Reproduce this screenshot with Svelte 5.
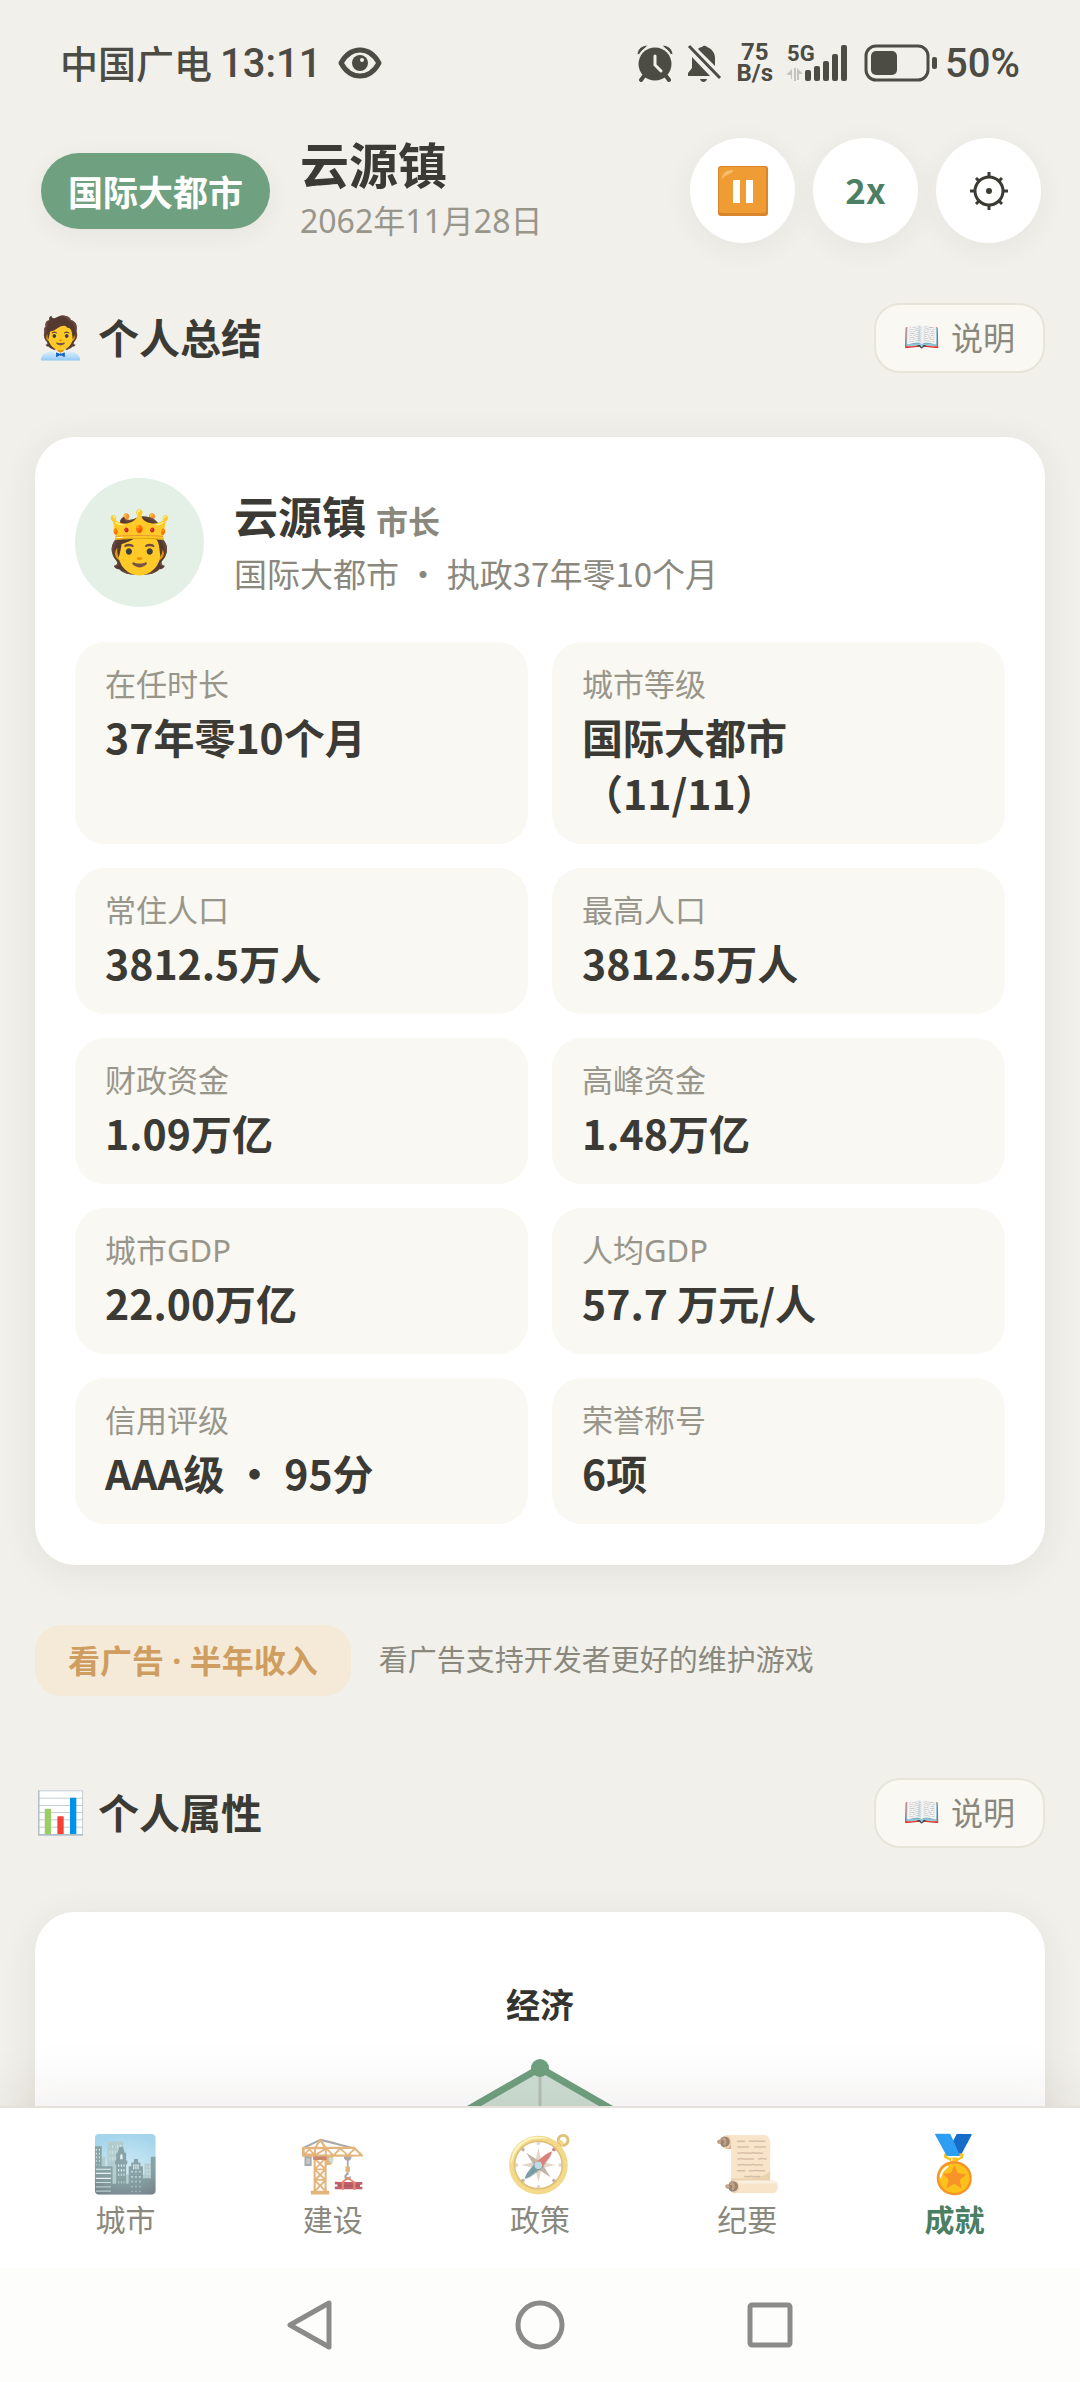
<script>
  let speed = $state(2);
  let active = $state('成就');

  const stats = [
    { label: '在任时长', value: '37年零10个月' },
    { label: '城市等级', value: '国际大都市\n（11/11）' },
    { label: '常住人口', value: '3812.5万人' },
    { label: '最高人口', value: '3812.5万人' },
    { label: '财政资金', value: '1.09万亿' },
    { label: '高峰资金', value: '1.48万亿' },
    { label: '城市GDP', value: '22.00万亿' },
    { label: '人均GDP', value: '57.7 万元/人' },
    { label: '信用评级', value: 'AAA级 · 95分' },
    { label: '荣誉称号', value: '6项' }
  ];

  const tabs = [
    { icon: '🏙️', name: '城市' },
    { icon: '🏗️', name: '建设' },
    { icon: '🧭', name: '政策' },
    { icon: '📜', name: '纪要' },
    { icon: '🏅', name: '成就' }
  ];
</script>

<div class="app">
  <div class="status">
    <div class="status-left">
      <span class="carrier">中国广电</span>
      <span class="num">13:11</span>
      <svg class="eye" width="44" height="32" viewBox="0 0 44 32">
        <path d="M3 16C8 7 15 3 22 3s14 4 19 13c-5 9-12 13-19 13S8 25 3 16z" fill="none" stroke="#4c4b44" stroke-width="5" stroke-linejoin="round" />
        <circle cx="22" cy="16" r="8" fill="#4c4b44" />
        <circle cx="24" cy="13" r="2" fill="#f1f0eb" />
      </svg>
    </div>
    <div class="status-right">
      <svg width="36" height="38" viewBox="0 0 36 38" fill="#4c4b44">
        <circle cx="18" cy="20" r="16.5" />
        <path d="M7 32l-3 4M29 32l3 4" stroke="#4c4b44" stroke-width="4" stroke-linecap="round" />
        <path d="M0 11C0 5 5 1 11 1c-1 3-7 5-8 9zM36 11C36 5 31 1 25 1c1 3 7 5 8 9z" stroke="#f1f0eb" stroke-width="1" />
        <path d="M18 12v9l6 6" fill="none" stroke="#f1f0eb" stroke-width="3" stroke-linecap="round" />
      </svg>
      <svg width="36" height="40" viewBox="0 0 36 40" fill="#4c4b44">
        <path d="M11 6c1-1 2-2 4-2a3 3 0 0 1 5 0c5 2 8 6 8 11v8z" />
        <path d="M5 14l18 19H1v-3l4-5z" />
        <path d="M2 3l31 32" stroke="#4c4b44" stroke-width="3" />
        <path d="M13 36h7c-1 4-6 4-7 0z" />
      </svg>
      <div class="rate"><span>75</span><span>B/s</span></div>
      <div class="signal">
        <span class="net">5G</span>
        <svg width="62" height="38" viewBox="0 0 62 38" fill="#4c4b44">
          <path d="M0 30l5-5v10h-1v-4H0zM7 24h2v13H7zM10 24l6 6h-4v6h-2z" fill="#c4c3bd" />
          <rect x="18" y="26" width="6" height="11" rx="2" />
          <rect x="27" y="22" width="6" height="15" rx="2" />
          <rect x="36" y="17" width="6" height="20" rx="2" />
          <rect x="45" y="10" width="6" height="27" rx="2" />
          <rect x="54" y="1" width="6" height="36" rx="2" />
        </svg>
      </div>
      <svg width="76" height="38" viewBox="0 0 76 38">
        <rect x="3" y="2" width="62" height="34" rx="10" fill="none" stroke="#4c4b44" stroke-width="3" />
        <rect x="8" y="7" width="26" height="24" rx="5" fill="#4c4b44" />
        <rect x="69" y="13" width="5" height="12" rx="2" fill="#4c4b44" />
      </svg>
      <span class="num">50%</span>
    </div>
  </div>

  <header class="topbar">
    <span class="level">国际大都市</span>
    <div class="town">
      <h1>云源镇</h1>
      <p>2062年11月28日</p>
    </div>
    <div class="actions">
      <button class="round" aria-label="暂停">
        <svg width="50" height="50" viewBox="0 0 50 50">
          <rect width="50" height="50" rx="3" fill="#d9852c" />
          <rect x="1" y="1" width="47" height="46" rx="3" fill="#f09c35" />
          <path d="M4 14C4 7 8 4 15 4c1 4-9 4-11 10z" fill="#f8bd6c" />
          <rect x="15" y="14" width="7" height="23" fill="#fff" />
          <rect x="28" y="14" width="7" height="23" fill="#fff" />
        </svg>
      </button>
      <button class="round speed" onclick={() => (speed = speed === 2 ? 1 : 2)}>{speed}x</button>
      <button class="round" aria-label="设置">
        <svg width="38" height="38" viewBox="0 0 38 38" fill="none" stroke="#3b3a34" stroke-width="3">
          <circle cx="19" cy="19" r="14" />
          <circle cx="19" cy="19" r="3" fill="#3b3a34" stroke="none" />
          <path d="M19 0v5M19 33v5M0 19h5M33 19h5M6 6l3 3M29 29l3 3M32 6l-3 3M9 29l-3 3" />
        </svg>
      </button>
    </div>
  </header>

  <main>
    <div class="section-head">
      <h2><span class="emoji">🧑‍💼</span> 个人总结</h2>
      <button class="help"><span class="emoji">📖</span> 说明</button>
    </div>

    <section class="card">
      <div class="profile">
        <div class="avatar emoji">🫅</div>
        <div class="who">
          <div class="name">云源镇 <small>市长</small></div>
          <div class="desc">国际大都市 · 执政37年零10个月</div>
        </div>
      </div>
      <dl class="stats">
        {#each stats as s}
          <div class="stat">
            <dt>{s.label}</dt>
            <dd>{s.value}</dd>
          </div>
        {/each}
      </dl>
    </section>

    <div class="ad">
      <button class="ad-btn">看广告 · 半年收入</button>
      <span class="ad-tip">看广告支持开发者更好的维护游戏</span>
    </div>

    <div class="section-head">
      <h2><span class="emoji">📊</span> 个人属性</h2>
      <button class="help"><span class="emoji">📖</span> 说明</button>
    </div>

    <section class="card radar">
      <svg width="600" height="520" viewBox="0 0 600 520">
        <text x="300" y="65" text-anchor="middle">经济</text>
        <polygon points="300,115 465,210 465,400 300,495 135,400 135,210" />
        <path d="M300 115v190" />
        <circle cx="300" cy="115" r="9" />
      </svg>
    </section>
  </main>

  <nav class="tabs">
    {#each tabs as t}
      <button class="tab" class:active={active === t.name} onclick={() => (active = t.name)}>
        <span class="tab-icon emoji">{t.icon}</span>
        <span>{t.name}</span>
      </button>
    {/each}
  </nav>

  <div class="sysnav">
    <svg width="50" height="54" viewBox="0 0 50 54"><path d="M44 5v44L5 27z" /></svg>
    <svg width="50" height="54" viewBox="0 0 50 54"><circle cx="25" cy="27" r="22" /></svg>
    <svg width="50" height="54" viewBox="0 0 50 54"><rect x="5" y="7" width="40" height="40" rx="2" /></svg>
  </div>
</div>

<style>
:global(body) {
  background: #f1f0eb;
}

.app {
  display: flex;
  flex-direction: column;
  height: 100vh;
  overflow: hidden;
  color: #3b3a34;
  background: #f1f0eb;
  font-family: "Noto Sans CJK SC", sans-serif;
}

h1, h2, p, dl, dd {
  margin: 0;
}

button {
  padding: 0;
  border: none;
  font-family: inherit;
  cursor: pointer;
}

svg {
  display: block;
}

.emoji {
  font-family: "Noto Color Emoji", sans-serif;
  font-weight: 400;
}

/* status bar */
.status {
  display: flex;
  align-items: center;
  justify-content: space-between;
  height: 126px;
  padding: 0 60px;
  box-sizing: border-box;
  color: #4c4b44;
  font-weight: 500;
}

.status-left {
  display: flex;
  align-items: center;
}

.carrier {
  margin-right: 8px;
  padding-bottom: 4px;
  font-size: 38px;
}

.num {
  font-family: Roboto, sans-serif;
  font-size: 40px;
}

.eye {
  margin-left: 16px;
}

.status-right {
  display: flex;
  align-items: center;
  gap: 14px;
}

.rate {
  display: flex;
  flex-direction: column;
  align-items: center;
  font-family: Roboto, sans-serif;
  font-size: 24px;
  font-weight: 700;
  line-height: 21px;
}

.signal {
  position: relative;
}

.net {
  position: absolute;
  top: 0;
  left: 0;
  font-family: Roboto, sans-serif;
  font-size: 22px;
  font-weight: 700;
  line-height: 20px;
}

.status-right .num {
  margin-left: -8px;
}

/* top bar */
.topbar {
  display: flex;
  align-items: center;
  height: 129px;
  padding: 0 39px 0 41px;
}

.level {
  padding: 0 27px;
  border-radius: 38px;
  background: #6fa080;
  box-shadow: 0 6px 24px rgba(60, 50, 30, 0.06);
  color: #fff;
  font-size: 35px;
  font-weight: 700;
  line-height: 76px;
}

.town {
  flex: 1;
  margin-left: 30px;
}

.town h1 {
  font-size: 49px;
  line-height: 60px;
}

.town p {
  color: #98968b;
  font-family: "Noto Sans", "Noto Sans CJK SC", sans-serif;
  font-size: 32px;
  line-height: 56px;
}

.actions {
  display: flex;
  gap: 18px;
}

.round {
  display: flex;
  align-items: center;
  justify-content: center;
  width: 105px;
  height: 105px;
  border-radius: 50%;
  background: #fff;
  box-shadow: 0 6px 30px rgba(60, 50, 30, 0.06);
}

.speed {
  padding-bottom: 4px;
  color: #4c7f65;
  font-size: 35px;
  font-weight: 700;
}

/* page */
main {
  flex: 1;
  min-height: 0;
  padding: 48px 35px 0;
  overflow-y: auto;
  scrollbar-width: none;
}

.section-head {
  display: flex;
  align-items: center;
  justify-content: space-between;
  margin-bottom: 64px;
}

.section-head h2 {
  display: flex;
  align-items: center;
  gap: 12px;
  padding-bottom: 4px;
  font-size: 41px;
  line-height: 60px;
}

.section-head h2 .emoji {
  padding-top: 4px;
}

.help {
  display: flex;
  align-items: center;
  gap: 10px;
  height: 70px;
  padding: 0 28px 4px;
  border: 2px solid #e7e5d9;
  border-radius: 26px;
  background: #f9f8f3;
  color: #8a887d;
  font-size: 32px;
}

.help .emoji {
  font-size: 30px;
}

.card {
  padding: 41px 40px;
  border-radius: 40px;
  background: #fff;
  box-shadow: 0 6px 36px rgba(60, 50, 30, 0.08);
}

.profile {
  display: flex;
  align-items: center;
  gap: 30px;
  margin-bottom: 35px;
}

.avatar {
  display: flex;
  align-items: center;
  justify-content: center;
  width: 129px;
  height: 129px;
  border-radius: 50%;
  background: #e4f0e6;
  font-size: 60px;
}

.who {
  padding-bottom: 6px;
}

.name {
  font-size: 44px;
  font-weight: 700;
  line-height: 62px;
}

.name small {
  color: #8a887d;
  font-size: 32px;
}

.desc {
  color: #8a887d;
  font-size: 33px;
  line-height: 44px;
}

.stats {
  display: grid;
  grid-template-columns: 1fr 1fr;
  gap: 24px;
}

.stat {
  padding: 22px 30px 24px;
  border-radius: 30px;
  background: #f9f8f3;
}

.stat dt {
  margin-bottom: 4px;
  color: #98968b;
  font-family: "Noto Sans", "Noto Sans CJK SC", sans-serif;
  font-size: 31px;
  line-height: 40px;
}

.stat dd {
  font-size: 41px;
  font-weight: 700;
  line-height: 56px;
  white-space: pre-line;
}

.ad {
  display: flex;
  align-items: center;
  gap: 28px;
  margin: 60px 0 82px;
  color: #8a887d;
  font-size: 29px;
}

.ad-btn {
  height: 71px;
  padding: 0 33px 4px;
  border-radius: 26px;
  background: #f5ead8;
  color: #cf9d5f;
  font-family: "Noto Sans", "Noto Sans CJK SC", sans-serif;
  font-size: 32px;
  font-weight: 700;
}

.ad-tip {
  padding-bottom: 6px;
}

.radar {
  display: flex;
  justify-content: center;
}

.radar text {
  fill: #33332f;
  font-size: 34px;
  font-weight: 700;
}

.radar polygon {
  fill: #6fa080;
  fill-opacity: 0.35;
  stroke: #6fa080;
  stroke-width: 7;
}

.radar path {
  stroke: #8a887d;
  stroke-opacity: 0.35;
  stroke-width: 3;
}

.radar circle {
  fill: #6fa080;
}

/* bottom navigation */
.tabs {
  position: relative;
  display: flex;
  height: 160px;
  padding: 0 22px;
  border-top: 2px solid #e3e1da;
  background: #fff;
  box-shadow: 0 -12px 60px rgba(60, 40, 30, 0.08);
}

.tab {
  display: flex;
  flex: 1;
  flex-direction: column;
  align-items: center;
  padding-top: 22px;
  background: none;
  color: #8a887d;
  font-size: 30px;
  line-height: 40px;
}

.tab-icon {
  height: 68px;
  font-size: 55px;
  line-height: 68px;
  opacity: 0.7;
  filter: grayscale(0.3);
}

.tab.active {
  color: #4a7f63;
  font-weight: 700;
}

.tab.active .tab-icon {
  opacity: 1;
  filter: none;
}

.sysnav {
  position: relative;
  display: flex;
  justify-content: center;
  gap: 180px;
  padding: 30px 0;
  background: #fdfdfb;
}

.sysnav svg {
  fill: none;
  stroke: #8b8b8b;
  stroke-width: 5;
  stroke-linejoin: round;
}
</style>
